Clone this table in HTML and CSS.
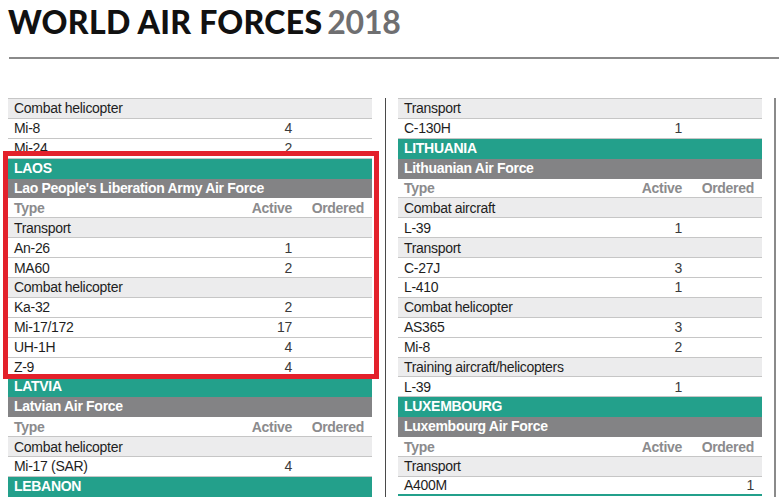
FILE: index.html
```html
<!DOCTYPE html>
<html lang="en">
<head>
<meta charset="utf-8">
<title>World Air Forces 2018</title>
<link rel="stylesheet" href="styles.css">
</head>
<body>
<header class="page-head">
  <h1 class="title">WORLD AIR FORCES <span class="year">2018</span></h1>
  <div class="rule"></div>
</header>
<main class="columns">
  <section class="col">
    <div class="row cat"><span>Combat helicopter</span></div>
    <div class="row item"><span>Mi-8</span><span class="num">4</span><span class="num"></span></div>
    <div class="row item"><span>Mi-24</span><span class="num">2</span><span class="num"></span></div>
    <div class="row country">LAOS</div>
    <div class="row force">Lao People's Liberation Army Air Force</div>
    <div class="row head"><span>Type</span><span class="num">Active</span><span class="num">Ordered</span></div>
    <div class="row cat"><span>Transport</span></div>
    <div class="row item"><span>An-26</span><span class="num">1</span><span class="num"></span></div>
    <div class="row item"><span>MA60</span><span class="num">2</span><span class="num"></span></div>
    <div class="row cat"><span>Combat helicopter</span></div>
    <div class="row item"><span>Ka-32</span><span class="num">2</span><span class="num"></span></div>
    <div class="row item"><span>Mi-17/172</span><span class="num">17</span><span class="num"></span></div>
    <div class="row item"><span>UH-1H</span><span class="num">4</span><span class="num"></span></div>
    <div class="row item"><span>Z-9</span><span class="num">4</span><span class="num"></span></div>
    <div class="row country">LATVIA</div>
    <div class="row force">Latvian Air Force</div>
    <div class="row head"><span>Type</span><span class="num">Active</span><span class="num">Ordered</span></div>
    <div class="row cat"><span>Combat helicopter</span></div>
    <div class="row item"><span>Mi-17 (SAR)</span><span class="num">4</span><span class="num"></span></div>
    <div class="row country">LEBANON</div>
    <div class="highlight" aria-hidden="true"></div>
  </section>
  <div class="divider"></div>
  <section class="col">
    <div class="row cat"><span>Transport</span></div>
    <div class="row item"><span>C-130H</span><span class="num">1</span><span class="num"></span></div>
    <div class="row country">LITHUANIA</div>
    <div class="row force">Lithuanian Air Force</div>
    <div class="row head"><span>Type</span><span class="num">Active</span><span class="num">Ordered</span></div>
    <div class="row cat"><span>Combat aircraft</span></div>
    <div class="row item"><span>L-39</span><span class="num">1</span><span class="num"></span></div>
    <div class="row cat"><span>Transport</span></div>
    <div class="row item"><span>C-27J</span><span class="num">3</span><span class="num"></span></div>
    <div class="row item"><span>L-410</span><span class="num">1</span><span class="num"></span></div>
    <div class="row cat"><span>Combat helicopter</span></div>
    <div class="row item"><span>AS365</span><span class="num">3</span><span class="num"></span></div>
    <div class="row item"><span>Mi-8</span><span class="num">2</span><span class="num"></span></div>
    <div class="row cat"><span>Training aircraft/helicopters</span></div>
    <div class="row item"><span>L-39</span><span class="num">1</span><span class="num"></span></div>
    <div class="row country">LUXEMBOURG</div>
    <div class="row force">Luxembourg Air Force</div>
    <div class="row head"><span>Type</span><span class="num">Active</span><span class="num">Ordered</span></div>
    <div class="row cat"><span>Transport</span></div>
    <div class="row item last"><span>A400M</span><span class="num"></span><span class="num">1</span></div>
  </section>
  <div class="divider thick"></div>
</main>
</body>
</html>
```

FILE: styles.css
```css
html, body {
  margin: 0;
  padding: 0;
  background: #ffffff;
  overflow: hidden;
}

body {
  width: 779px;
  height: 497px;
  font-family: "Liberation Sans", Arial, sans-serif;
  color: #1e1e1e;
}

.page-head {
  padding: 6px 0 0 8px;
}

.title {
  margin: 0;
  font-family: "Lato", "Liberation Sans", sans-serif;
  font-weight: 900;
  font-size: 32px;
  line-height: 32px;
  letter-spacing: 0.3px;
  color: #111111;
}

.year {
  margin-left: -3px;
  letter-spacing: -0.2px;
  color: #6f6f71;
  font-weight: 700;
}

.rule {
  margin-top: 19px;
  margin-left: 1px;
  height: 2px;
  background: #8a8a8a;
}

.columns {
  display: flex;
  align-items: stretch;
  margin-top: 39px;
  padding-left: 8px;
  height: 400px;
}

.col {
  position: relative;
  width: 364px;
  border-top: 1px solid #c6c6c6;
}

.divider {
  width: 1px;
  margin: 0 12px 0 13px;
  background: #4a4a4a;
}

.divider.thick {
  width: 2px;
  margin: 0;
  margin-left: 12px;
  background: #8a8a8a;
}

.row {
  box-sizing: border-box;
  height: 19.9px;
  display: grid;
  grid-template-columns: 1fr 80px 72px;
  align-items: center;
  padding: 0 8px 0 6px;
  font-size: 14px;
  letter-spacing: -0.3px;
  line-height: 16px;
  white-space: nowrap;
}

.row.item,
.row.cat,
.row.head {
  border-bottom: 1px solid #c6c6c6;
}

.row.item.last {
  height: 19px;
  border-bottom: 2px solid #23a08b;
}

.row.cat {
  background: #ececed;
}

.row.item {
  background: #ffffff;
}

.row.head {
  background: #ffffff;
  color: #8b8b8d;
  font-weight: 700;
}

.row.country {
  display: block;
  background: #23a08b;
  color: #ffffff;
  font-weight: 700;
  line-height: 19.9px;
}

.row.force {
  display: block;
  background: #838385;
  color: #ffffff;
  font-weight: 700;
  line-height: 19.9px;
}

.num {
  text-align: right;
}

.row.item .num {
  color: #3a3a3a;
}

.highlight {
  position: absolute;
  left: -5px;
  top: 52px;
  width: 366px;
  height: 218px;
  border: 5px solid #e3212b;
  pointer-events: none;
}
```
